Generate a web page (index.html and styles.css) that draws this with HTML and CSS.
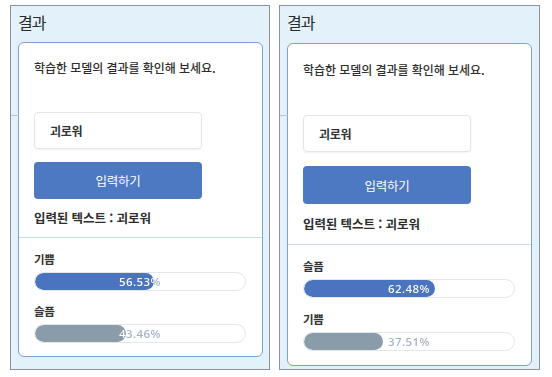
FILE: index.html
```html
<!DOCTYPE html>
<html lang="ko">

<head>
  <meta charset="UTF-8" />
  <meta name="viewport" content="width=device-width, initial-scale=1.0" />
  <title>결과</title>
  <link rel="stylesheet" href="styles.css">
</head>

<body>
  <!-- Result 1 -->
  <div class="panel">
    <div class="title">결과</div>
    <div class="card">
      <div class="card-top">
        <p class="guide">학습한 모델의 결과를 확인해 보세요.</p>
        <div class="input-box">괴로워</div>
        <button class="submit">입력하기</button>
        <p class="entered">입력된 텍스트 : 괴로워</p>
      </div>
      <div class="card-bottom">
        <div class="label">기쁨</div>
        <div class="bar" style="--p:56.53%">
          <div class="bar-fill top"></div>
          <span class="bar-text">56.53%</span>
        </div>
        <div class="label">슬픔</div>
        <div class="bar" style="--p:43.46%">
          <div class="bar-fill rest"></div>
          <span class="bar-text">43.46%</span>
        </div>
      </div>
    </div>
  </div>

  <!-- Result 2 -->
  <div class="panel wide">
    <div class="title">결과</div>
    <div class="card">
      <div class="card-top">
        <p class="guide">학습한 모델의 결과를 확인해 보세요.</p>
        <div class="input-box">괴로워</div>
        <button class="submit">입력하기</button>
        <p class="entered">입력된 텍스트 : 괴로워</p>
      </div>
      <div class="card-bottom">
        <div class="label">슬픔</div>
        <div class="bar" style="--p:62.48%">
          <div class="bar-fill top"></div>
          <span class="bar-text">62.48%</span>
        </div>
        <div class="label">기쁨</div>
        <div class="bar" style="--p:37.51%">
          <div class="bar-fill rest"></div>
          <span class="bar-text">37.51%</span>
        </div>
      </div>
    </div>
  </div>
</body>

</html>
```

FILE: styles.css
```css
* {
  margin: 0;
  padding: 0;
  box-sizing: border-box;
}

body {
  display: flex;
  gap: 9px;
  padding: 5px 0 0 10px;
  background-color: #fff;
  font-family: "Noto Sans CJK KR", "Noto Sans", sans-serif;
  color: #333;
}

/* Panel */
.panel {
  position: relative;
  width: 260px;
  height: 365px;
  padding: 5px 6px 0 7px;
  border: 1px solid #8d9399;
  background-color: #e2f1fa;
}

/* faint line behind the card */
.panel::before {
  content: "";
  position: absolute;
  left: 0;
  top: 109px;
  width: 8px;
  height: 1px;
  background-color: #b9c4cf;
}

.panel.wide {
  width: 261px;
  padding-right: 7px;
}

.title {
  font-size: 16px;
  line-height: 22px;
  letter-spacing: -1px;
  margin-bottom: 9px;
  color: #2b2b2b;
}

.wide .title {
  margin-bottom: 10px;
}

/* Card */
.card {
  background-color: #fff;
  border: 1.5px solid #7da0d8;
  border-radius: 6px;
}

.card-top {
  padding: 16px 16px 10px 15px;
  border-bottom: 1px solid #c9dcef;
}

.guide {
  font-size: 12px;
  font-weight: 500;
  line-height: 18px;
  letter-spacing: -0.05px;
  color: #2e2e2e;
}

.input-box {
  width: 168px;
  height: 37px;
  margin-top: 35px;
  padding-left: 15px;
  border: 1px solid #e2e5e9;
  border-radius: 4px;
  box-shadow: 0 1px 2px rgba(0, 0, 0, 0.06);
  font-size: 12px;
  font-weight: 700;
  line-height: 35px;
  letter-spacing: -0.3px;
  color: #333;
}

.submit {
  display: block;
  width: 168px;
  height: 37px;
  margin-top: 13px;
  border: none;
  border-radius: 4px;
  background-color: #4d78c2;
  font-family: inherit;
  font-size: 12.5px;
  letter-spacing: -0.2px;
  color: #fff;
}

.entered {
  margin-top: 10px;
  font-size: 12.5px;
  font-weight: 700;
  line-height: 18px;
  letter-spacing: -0.1px;
  color: #2e2e2e;
}

.wide .card-top {
  padding-top: 17px;
  padding-bottom: 11px;
}

.wide .input-box {
  margin-top: 36px;
}

.wide .submit {
  height: 38px;
  margin-top: 14px;
}

.wide .entered {
  margin-top: 11px;
}

.card-bottom {
  padding: 12px 15px 13px 15px;
}

.wide .card-bottom {
  padding-top: 12px;
  padding-bottom: 14px;
}

.label {
  font-size: 11.5px;
  font-weight: 700;
  line-height: 18px;
  letter-spacing: -0.3px;
  color: #333;
  margin-bottom: 4px;
}

.label + .bar + .label {
  margin-top: 11px;
}

.wide .label + .bar + .label {
  margin-top: 12px;
}

/* Bars */
.bar {
  display: grid;
  width: 212px;
  height: 19px;
  border: 1px solid #e3e6ea;
  border-radius: 10px;
  background-color: #fff;
  overflow: hidden;
}

.bar > * {
  grid-area: 1 / 1;
}

.bar-fill {
  width: var(--p);
  height: 100%;
  border-radius: 10px;
}

.bar-fill.top {
  background-color: #4a74c0;
}

.bar-fill.rest {
  background-color: #8a9caa;
}

.bar-text {
  font-family: "Open Sans", sans-serif;
  font-size: 11.5px;
  font-weight: 600;
  line-height: 17px;
  letter-spacing: 0.4px;
  text-align: center;
  background: linear-gradient(90deg, #fff var(--p), #a1b2c6 var(--p));
  -webkit-background-clip: text;
  background-clip: text;
  color: transparent;
}
```
